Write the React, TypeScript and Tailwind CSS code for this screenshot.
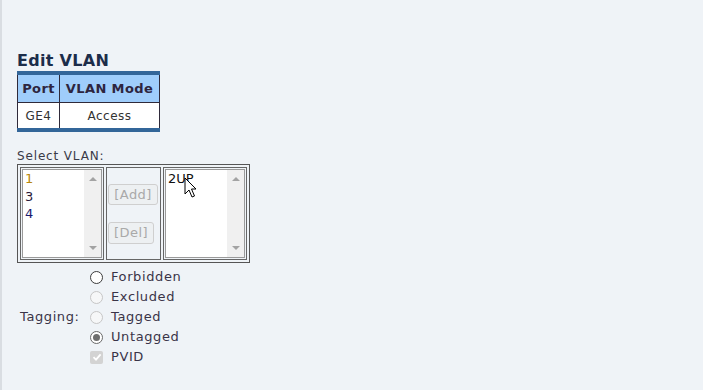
const font = { fontFamily: '"DejaVu Sans", Verdana, sans-serif' };

const ListBox = ({ items }: { items: { text: string; color: string }[] }) => (
  <div className="flex h-[89px] w-[80px] border border-[#9a9a9a] bg-white">
    <div className="flex-1 pl-[2px] text-[13px] leading-[17.5px]">
      {items.map((it, i) => (
        <div key={i} className={it.color}>
          {it.text}
        </div>
      ))}
    </div>
    <div className="flex w-[17px] flex-col items-center justify-between bg-[#f0f0f0] py-[7px]">
      <div className="h-0 w-0 border-x-[4px] border-b-[4px] border-x-transparent border-b-[#a3a3a3]" />
      <div className="h-0 w-0 border-x-[4px] border-t-[4px] border-x-transparent border-t-[#a3a3a3]" />
    </div>
  </div>
);

const Radio = ({ state }: { state: "on" | "off" | "disabled" | "checked" }) => {
  if (state === "off")
    return <div className="h-[13px] w-[13px] rounded-full border border-[#3c3c3c] bg-white" />;
  if (state === "disabled")
    return <div className="h-[13px] w-[13px] rounded-full border border-[#c6c6c6] bg-[#f6f7f8]" />;
  return (
    <div className="flex h-[13px] w-[13px] items-center justify-center rounded-full border border-[#6a6a6a] bg-white">
      <div className="h-[7px] w-[7px] rounded-full bg-[#6e6e6e]" />
    </div>
  );
};

const App = () => {
  const tagging = [
    { label: "Forbidden", state: "off" as const },
    { label: "Excluded", state: "disabled" as const },
    { label: "Tagged", state: "disabled" as const },
    { label: "Untagged", state: "checked" as const },
  ];

  return (
    <div
      className="min-h-screen w-full border-l-2 border-[#d9dde2] bg-[#eff3f7] pl-[15px] pt-[51px] text-[#333]"
      style={font}
    >
      {/* Title */}
      <h2 className="text-[16px] font-bold leading-[20px] tracking-[0.3px] text-[#1c2d4a]">Edit VLAN</h2>

      {/* Port table */}
      <div className="w-[143px] border-y-4 border-[#336699]">
        <div className="flex h-[28px] border-x border-b border-[#2f2a3a] bg-[#9fcdfb] text-[13px] font-bold tracking-[0.4px] text-[#2d2540]">
          <div className="flex w-[42px] items-center justify-center border-r border-[#2f2a3a] pt-[1px]">Port</div>
          <div className="flex flex-1 items-center justify-center pt-[1px]">VLAN Mode</div>
        </div>
        <div className="flex h-[25px] border-x border-[#2f2a3a] bg-white text-[12px] tracking-[0.5px] text-[#333]">
          <div className="flex w-[42px] items-center justify-center border-r border-[#2f2a3a] pt-[1px]">GE4</div>
          <div className="flex flex-1 items-center justify-center pt-[1px]">Access</div>
        </div>
      </div>

      {/* Select VLAN */}
      <div className="mt-[16px] text-[12px] leading-[16px] tracking-[0.85px] text-[#3a3a48]">Select VLAN:</div>
      <div className="flex w-[233px] gap-[2px] border border-[#555] p-[2px]">
        <div className="h-[93px] w-[84px] border border-[#666] p-[1px]">
          <ListBox
            items={[
              { text: "1", color: "text-[#b8860b]" },
              { text: "3", color: "text-[#2a1838]" },
              { text: "4", color: "text-[#1a1a6e]" },
            ]}
          />
        </div>
        <div className="flex h-[93px] w-[55px] flex-col justify-center gap-[17px] border border-[#666] pl-[1px] pt-[1px]">
          <button
            disabled
            className="h-[21px] w-[50px] rounded-[3px] border border-[#cfcfcf] bg-[#edf0f2] text-[13px] tracking-[0.4px] text-[#a9a9a9]"
          >
            [Add]
          </button>
          <button
            disabled
            className="h-[22px] w-[46px] rounded-[3px] border border-[#cfcfcf] bg-[#edf0f2] text-[13px] tracking-[0.4px] text-[#a9a9a9]"
          >
            [Del]
          </button>
        </div>
        <div className="relative h-[93px] w-[84px] border border-[#666] p-[1px]">
          <ListBox items={[{ text: "2UP", color: "text-[#111]" }]} />
          {/* mouse cursor */}
          <svg className="absolute left-[20px] top-[9px]" width="13" height="21" viewBox="0 0 13 21">
            <path d="M1 1 L1 17 L5 13 L8 20 L10.5 19 L7.5 12 L12 12 Z" fill="#fff" stroke="#000" strokeWidth="1" />
          </svg>
        </div>
      </div>

      {/* Tagging */}
      <div className="mt-[4px] flex items-center text-[13px] tracking-[0.6px] text-[#3a3448]">
        <div className="w-[73px] pl-[3px]">Tagging:</div>
        <div className="flex flex-col">
          {tagging.map((t) => (
            <div key={t.label} className="flex h-[20px] items-center gap-[8px]">
              <Radio state={t.state} />
              <span>{t.label}</span>
            </div>
          ))}
          <div className="flex h-[20px] items-center gap-[8px]">
            <div className="flex h-[13px] w-[13px] items-center justify-center rounded-[2px] bg-[#d3d3d3]">
              <svg width="10" height="10" viewBox="0 0 10 10">
                <path d="M1.5 5.2 L4 7.6 L8.6 2.4" fill="none" stroke="#fff" strokeWidth="1.8" />
              </svg>
            </div>
            <span>PVID</span>
          </div>
        </div>
      </div>
    </div>
  );
};

export default App;
